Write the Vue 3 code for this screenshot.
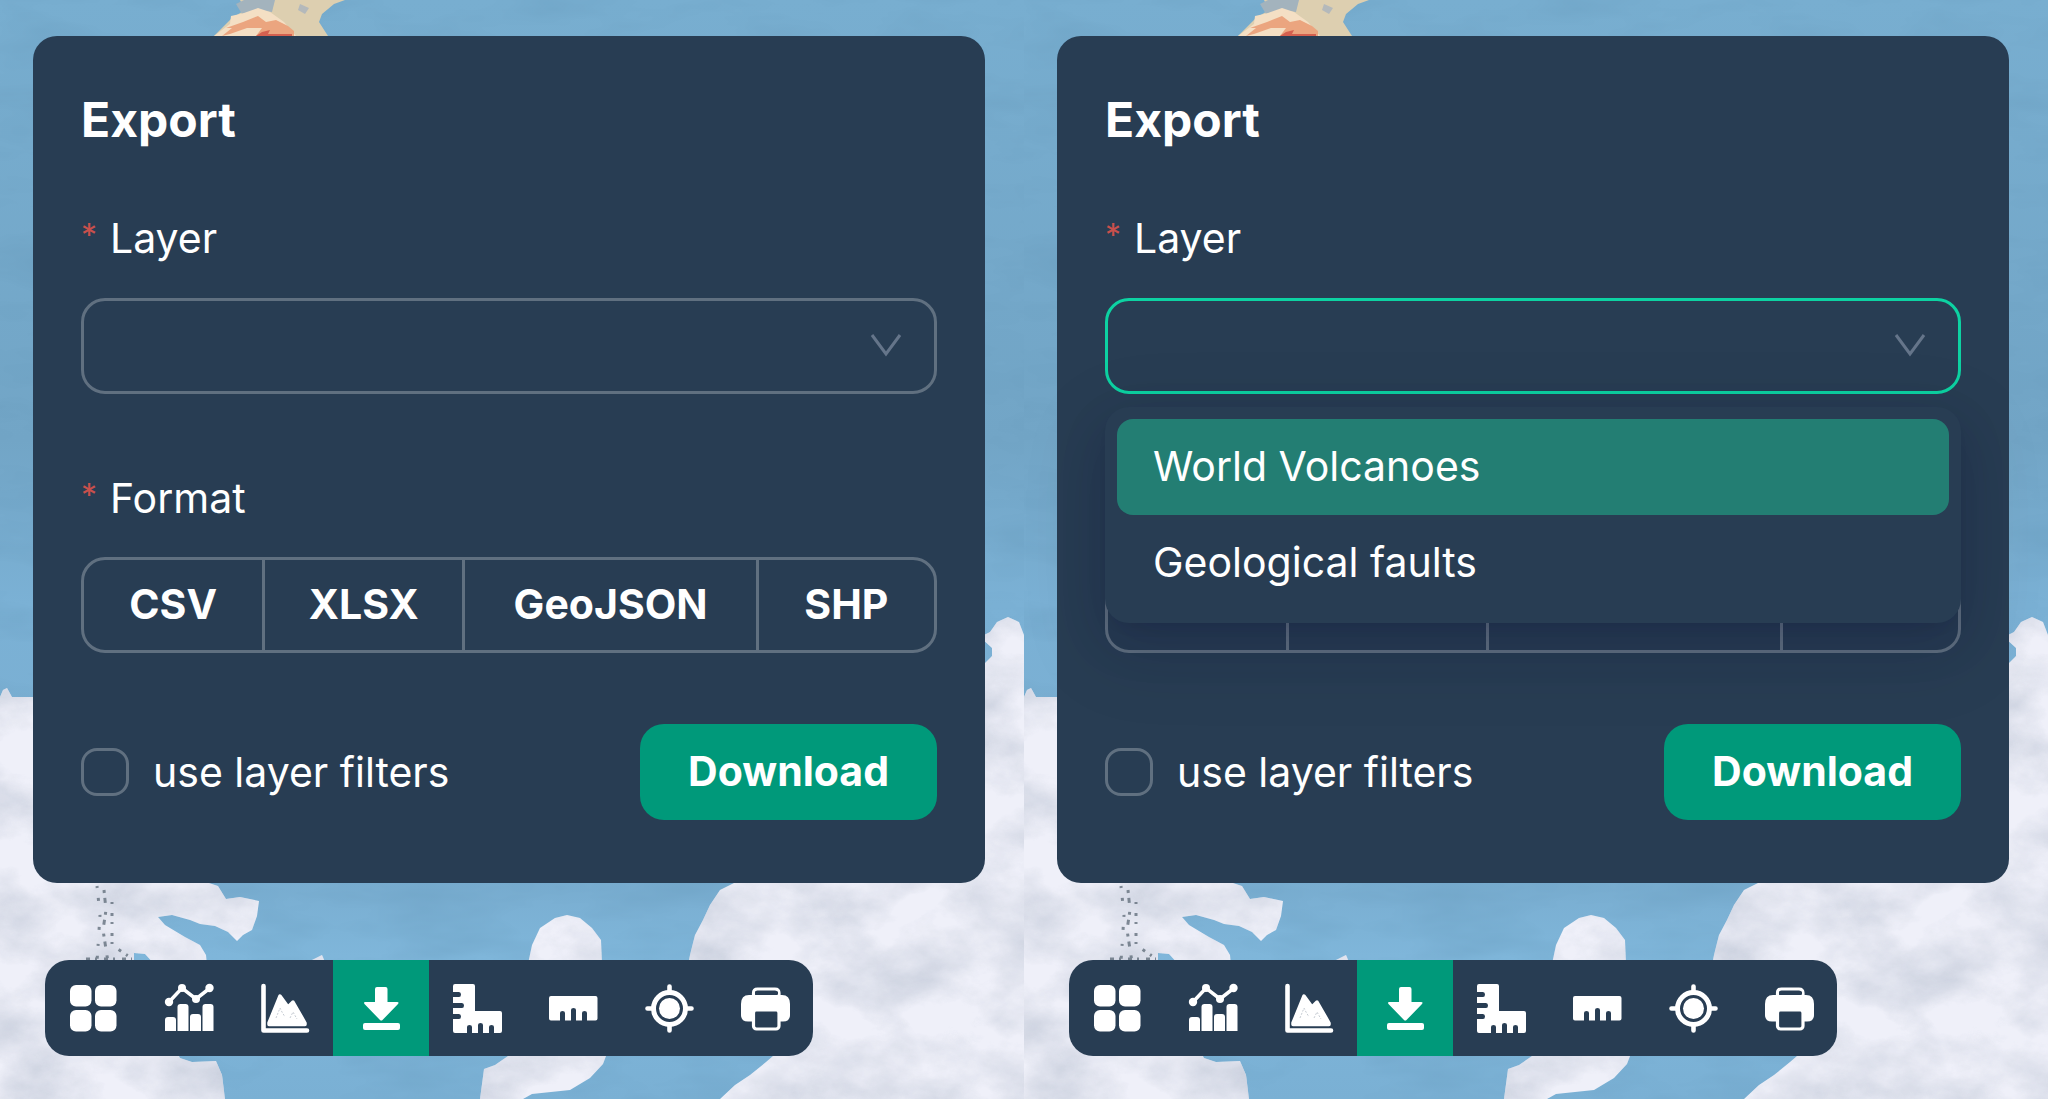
<script setup>
const panels = [
  { id: 'closed', open: false },
  { id: 'open', open: true },
]
const layers = ['World Volcanoes', 'Geological faults']
const formats = ['CSV', 'XLSX', 'GeoJSON', 'SHP']
const tools = [
  { name: 'Layers', icon: 'grid' },
  { name: 'Statistics', icon: 'chart' },
  { name: 'Elevation profile', icon: 'profile' },
  { name: 'Export', icon: 'download' },
  { name: 'Measure area', icon: 'corner' },
  { name: 'Measure distance', icon: 'ruler' },
  { name: 'My location', icon: 'target' },
  { name: 'Print', icon: 'print' },
]
</script>

<template>
  <main class="page">
    <section v-for="panel in panels" :key="panel.id" class="pane">
      <svg class="map" viewBox="0 0 1024 1099" preserveAspectRatio="none" aria-hidden="true">
        <defs>
          <linearGradient :id="'sea-' + panel.id" x1="0" y1="0" x2="0" y2="1">
            <stop offset="0" stop-color="#78aed0" />
            <stop offset="0.4" stop-color="#72a5c6" />
            <stop offset="0.55" stop-color="#7bb1d5" />
            <stop offset="0.8" stop-color="#79add0" />
            <stop offset="0.87" stop-color="#7fb6da" />
            <stop offset="1" stop-color="#7ab0d4" />
          </linearGradient>
          <filter :id="'snow-' + panel.id" x="0" y="0" width="100%" height="100%" color-interpolation-filters="sRGB">
            <feTurbulence type="fractalNoise" baseFrequency="0.012 0.018" numOctaves="6" seed="7" />
            <feColorMatrix values="0 0 0 0 0.74  0 0 0 0 0.77  0 0 0 0 0.83  1.4 0 0 0 -0.5" />
            <feComposite in2="SourceGraphic" operator="in" result="shade" />
            <feMerge>
              <feMergeNode in="SourceGraphic" />
              <feMergeNode in="shade" />
            </feMerge>
          </filter>
          <filter :id="'wave-' + panel.id" x="0" y="0" width="100%" height="100%" color-interpolation-filters="sRGB">
            <feTurbulence type="fractalNoise" baseFrequency="0.008 0.025" numOctaves="4" seed="3" />
            <feColorMatrix values="0 0 0 0 0.38  0 0 0 0 0.58  0 0 0 0 0.71  0.6 0 0 0 -0.26" />
          </filter>
        </defs>
        <rect width="1024" height="1099" :fill="'url(#sea-' + panel.id + ')'" />
        <rect width="1024" height="1099" :filter="'url(#wave-' + panel.id + ')'" />
        <path d="M240 0H345L334 4L322 14L319 22L328 36H214L232 18L245 10Z" fill="#ddcfb0" />
        <path d="M244 0H275L272 12L256 10L242 14L236 4Z" fill="#a3b3bd" />
        <path d="M300 4L309 8L305 14L298 10Z" fill="#b4b9bb" />
        <path d="M214 36L230 24L231 16L240 14L244 13L258 8L270 12L284 22L296 36Z" fill="#f4dfc4" />
        <path d="M222 36L232 28L226 28L243 22L258 16L266 22L276 20L288 26L294 31V36H256L262 28L247 28L230 34Z" fill="#eba57f" />
        <path d="M256 36L262 32L270 30L268 34H292V36Z" fill="#d4604f" />
        <g :filter="'url(#snow-' + panel.id + ')'" fill="#eff0f9">
          <path d="M0 697L3 690L7 688L12 697H33L200 880L218 886L226 899L240 897L259 901L257 916L252 930L243 935L237 941L228 932L215 926L200 924L190 920L172 915L158 917L165 925L185 937L200 945L206 955L207 965H155L145 954L134 953V970L180 1058L192 1062L216 1061L222 1075L225 1099H0Z" />
          <path d="M308 962L318 957L322 955L325 962Z" />
          <path d="M528 964L532 945L540 928L555 918L567 915L580 918L592 928L601 940L602 964Z" />
          <path d="M508 1056L495 1065L484 1069L480 1099H523L532 1094L570 1090L590 1078L603 1064L606 1056Z" />
          <path d="M740 880L720 890L710 905L703 920L695 935L690 955L688 965L780 1050L766 1062L750 1075L735 1085L720 1099H1024V635L1019 622L1008 617L997 622L990 632L980 637L992 648V656L980 668Z" />
        </g>
        <g fill="none" stroke="#53616e" stroke-width="3" opacity="0.7">
          <path d="M104 890L106 910L103 930L108 962" stroke-dasharray="3 5 5 9" />
          <path d="M97 886L100 915L97 962" stroke-dasharray="2 10 3 14" />
          <path d="M112 902L112 945L134 960" stroke-dasharray="2 9 3 6" />
          <path d="M86 959H132" stroke-dasharray="4 5 2 7" />
        </g>
      </svg>

      <form class="card" @submit.prevent>
        <h2 class="title">Export</h2>
        <div class="field">
          <label class="label" :for="'layer-' + panel.id"><span class="star">*</span>Layer</label>
          <div class="select-box">
            <select :id="'layer-' + panel.id" class="select" :class="{ focused: panel.open }">
              <option value=""></option>
              <option v-for="layer in layers" :key="layer">{{ layer }}</option>
            </select>
            <svg class="chevron" viewBox="0 0 32 24" aria-hidden="true"><path d="M2 2L16 21L30 2" /></svg>
            <ul v-if="panel.open" class="menu">
              <li v-for="(layer, i) in layers" :key="layer" class="choice" :class="{ active: i === 0 }">{{ layer }}</li>
            </ul>
          </div>
        </div>
        <div class="field" :class="{ covered: panel.open }">
          <span :id="'format-' + panel.id" class="label"><span class="star">*</span>Format</span>
          <div class="formats" role="group" :aria-labelledby="'format-' + panel.id">
            <button v-for="format in formats" :key="format" type="button" class="format"><span class="format-name">{{ format }}</span></button>
          </div>
        </div>
        <div class="footer">
          <label class="check"><input type="checkbox" class="box" />use layer filters</label>
          <button type="submit" class="download">Download</button>
        </div>
      </form>

      <nav class="toolbar">
        <button v-for="tool in tools" :key="tool.icon" type="button" class="tool" :class="{ active: tool.icon === 'download' }" :aria-label="tool.name">
          <svg viewBox="0 0 48 48" class="glyph" aria-hidden="true">
            <g v-if="tool.icon === 'grid'">
              <rect x="1" y="1" width="21.5" height="21.5" rx="6" />
              <rect x="26" y="1" width="21.5" height="21.5" rx="6" />
              <rect x="1" y="26" width="21.5" height="21.5" rx="6" />
              <rect x="26" y="26" width="21.5" height="21.5" rx="6" />
            </g>
            <g v-else-if="tool.icon === 'chart'">
              <path d="M4 18L17 4L31 15L45 4" fill="none" stroke="#fff" stroke-width="3.5" />
              <circle cx="4" cy="18" r="4.2" /><circle cx="17" cy="4" r="4" /><circle cx="31" cy="15" r="4" /><circle cx="44.5" cy="4" r="4.2" />
              <path d="M0 47V36Q0 33 3 33H8Q11 33 11 36V47Z" />
              <path d="M12.500 47V23Q12.500 20 15.500 20H20.500Q23.500 20 23.500 23V47Z" />
              <path d="M25 47V33Q25 30 28 30H33Q36 30 36 33V47Z" />
              <path d="M37.500 47V23Q37.500 20 40.500 20H45.500Q48.500 20 48.500 23V47Z" />
            </g>
            <g v-else-if="tool.icon === 'profile'">
              <path d="M2.500 2V46.500H46" fill="none" stroke="#fff" stroke-width="4.600" stroke-linecap="round" stroke-linejoin="round" />
              <path d="M8 39L19 12L27 23L32 18L44 39V40.500H8Z" stroke="#fff" stroke-width="3.500" stroke-linejoin="round" />
              <path d="M15 34L19 24L21 28L24 33M29 34L32 28L36 35" fill="none" stroke="#c5cbd2" stroke-width="1" stroke-dasharray="2 1.500" />
            </g>
            <g v-else-if="tool.icon === 'download'">
              <path d="M18 5Q18 3 20 3H28.500Q30.500 3 30.500 5V18H40Q42.500 18 41 20L25.500 36Q24.300 37 23 36L7.500 20Q6 18 8.500 18H18Z" />
              <rect x="6" y="39" width="37" height="7" rx="2" />
            </g>
            <path v-else-if="tool.icon === 'corner'" d="M2 0H20Q22 0 22 2V27H47Q49 27 49 29V47Q49 49 47 49H41V43Q41 41 38.500 41Q36 41 36 43V49H30V41Q30 39 27.500 39Q25 39 25 41V49H19V43Q19 41 16.500 41Q14 41 14 43V49H2Q0 49 0 47V35H6Q8 35 8 32.500Q8 30 6 30H0V24H9Q11 24 11 21.500Q11 19 9 19H0V13H6Q8 13 8 10.500Q8 8 6 8H0V2Q0 0 2 0Z" />
            <path v-else-if="tool.icon === 'ruler'" d="M2 12H46.500Q48.500 12 48.500 14V34.500Q48.500 36.500 46.500 36.500H38V29Q38 27 35.500 27Q33 27 33 29V36.500H27V26Q27 24 24.500 24Q22 24 22 26V36.500H16V29Q16 27 13.500 27Q11 27 11 29V36.500H2Q0 36.500 0 34.500V14Q0 12 2 12Z" />
            <g v-else-if="tool.icon === 'target'">
              <circle cx="24.500" cy="24.500" r="16" fill="none" stroke="#fff" stroke-width="5" />
              <circle cx="24.500" cy="24.500" r="10.500" />
              <path d="M24.500 2.500V7M24.500 42V46.500M2.500 24.500H7M42 24.500H46.500" stroke="#fff" stroke-width="4.600" stroke-linecap="round" />
            </g>
            <g v-else>
              <path d="M12.500 12V9Q12.500 5 16.500 5H34Q38 5 38 9V12" fill="none" stroke="#fff" stroke-width="3.200" />
              <path d="M8 11H41Q49 11 49 20V31Q49 37.500 42 37.500H7Q0 37.500 0 31V20Q0 11 8 11Z" />
              <rect x="12.500" y="26" width="25.500" height="19" rx="3" fill="#283d53" stroke="#fff" stroke-width="3.200" />
              <path d="M14 9H37" stroke="#283d53" stroke-width="3" />
            </g>
          </svg>
        </button>
      </nav>
    </section>
  </main>
</template>

<style>
body { margin: 0; }
</style>

<style scoped>
.page { display: grid; grid-template-columns: 1fr 1fr; min-height: 100vh; font-family: Inter, "Noto Sans", sans-serif; color: #fff; font-size: 41px; line-height: 48px; }
.pane { position: relative; box-sizing: border-box; padding: 36px 39px 41px 33px; overflow: hidden; }
.map { position: absolute; inset: 0; width: 100%; height: 100%; }
.card { position: relative; box-sizing: border-box; padding: 56px 48px 63px; border-radius: 24px; background: #283d53; }
.title { margin: 0 0 66px; font-size: 48px; line-height: 56px; font-weight: 700; }
.field { margin-bottom: 80px; }
.field:has(.formats) { margin-bottom: 71px; }
.label { display: flex; margin-bottom: 36px; }
.field:has(.formats) .label { margin-bottom: 35px; }
.star { width: 29px; color: #c9504c; font-size: 32px; line-height: 44px; }
.select-box { position: relative; }
.select { appearance: none; display: block; box-sizing: border-box; width: 100%; height: 96px; border: 3px solid #607080; border-radius: 24px; background: transparent; outline: none; }
.select.focused { border-color: #0dd2a2; }
.chevron { position: absolute; right: 35px; top: 35px; width: 32px; height: 24px; fill: none; stroke: #65758a; stroke-width: 3; }
.menu { position: absolute; z-index: 1; left: 0; right: 0; top: 109px; margin: 0; padding: 12px; list-style: none; border-radius: 24px; background: #283d53; box-shadow: 0 18px 48px rgba(0, 10, 50, 0.12), 0 9px 18px -12px rgba(0, 10, 50, 0.16), 0 24px 72px 16px rgba(0, 10, 50, 0.1); }
.choice { padding: 23px 36px 25px; border-radius: 16px; }
.choice.active { background: #237e73; }
.formats { display: grid; grid-template-columns: 178fr 200fr 293fr 178fr; border: 3px solid #607080; border-radius: 24px; }
.format { height: 90px; padding: 0 0 2px; border: 0; background: none; color: inherit; font: inherit; font-weight: 700; }
.format + .format { border-left: 3px solid #607080; }
.covered .label, .covered .format-name { visibility: hidden; }
.footer { display: flex; justify-content: space-between; align-items: center; }
.check { display: flex; align-items: center; gap: 24px; }
.box { appearance: none; box-sizing: border-box; width: 48px; height: 48px; margin: 0; border: 3px solid #607080; border-radius: 16px; }
.download { height: 96px; padding: 0 48px 2px; border: 0; border-radius: 24px; background: #00997a; color: inherit; font: inherit; font-weight: 700; }
.toolbar { position: relative; display: flex; width: max-content; margin: 77px 0 0 12px; border-radius: 24px; overflow: hidden; background: #283d53; }
.tool { width: 96px; height: 96px; padding: 24px; border: 0; background: none; color: #fff; }
.tool.active { background: #00997a; }
.glyph { display: block; width: 48px; height: 48px; overflow: visible; fill: #fff; }
</style>
